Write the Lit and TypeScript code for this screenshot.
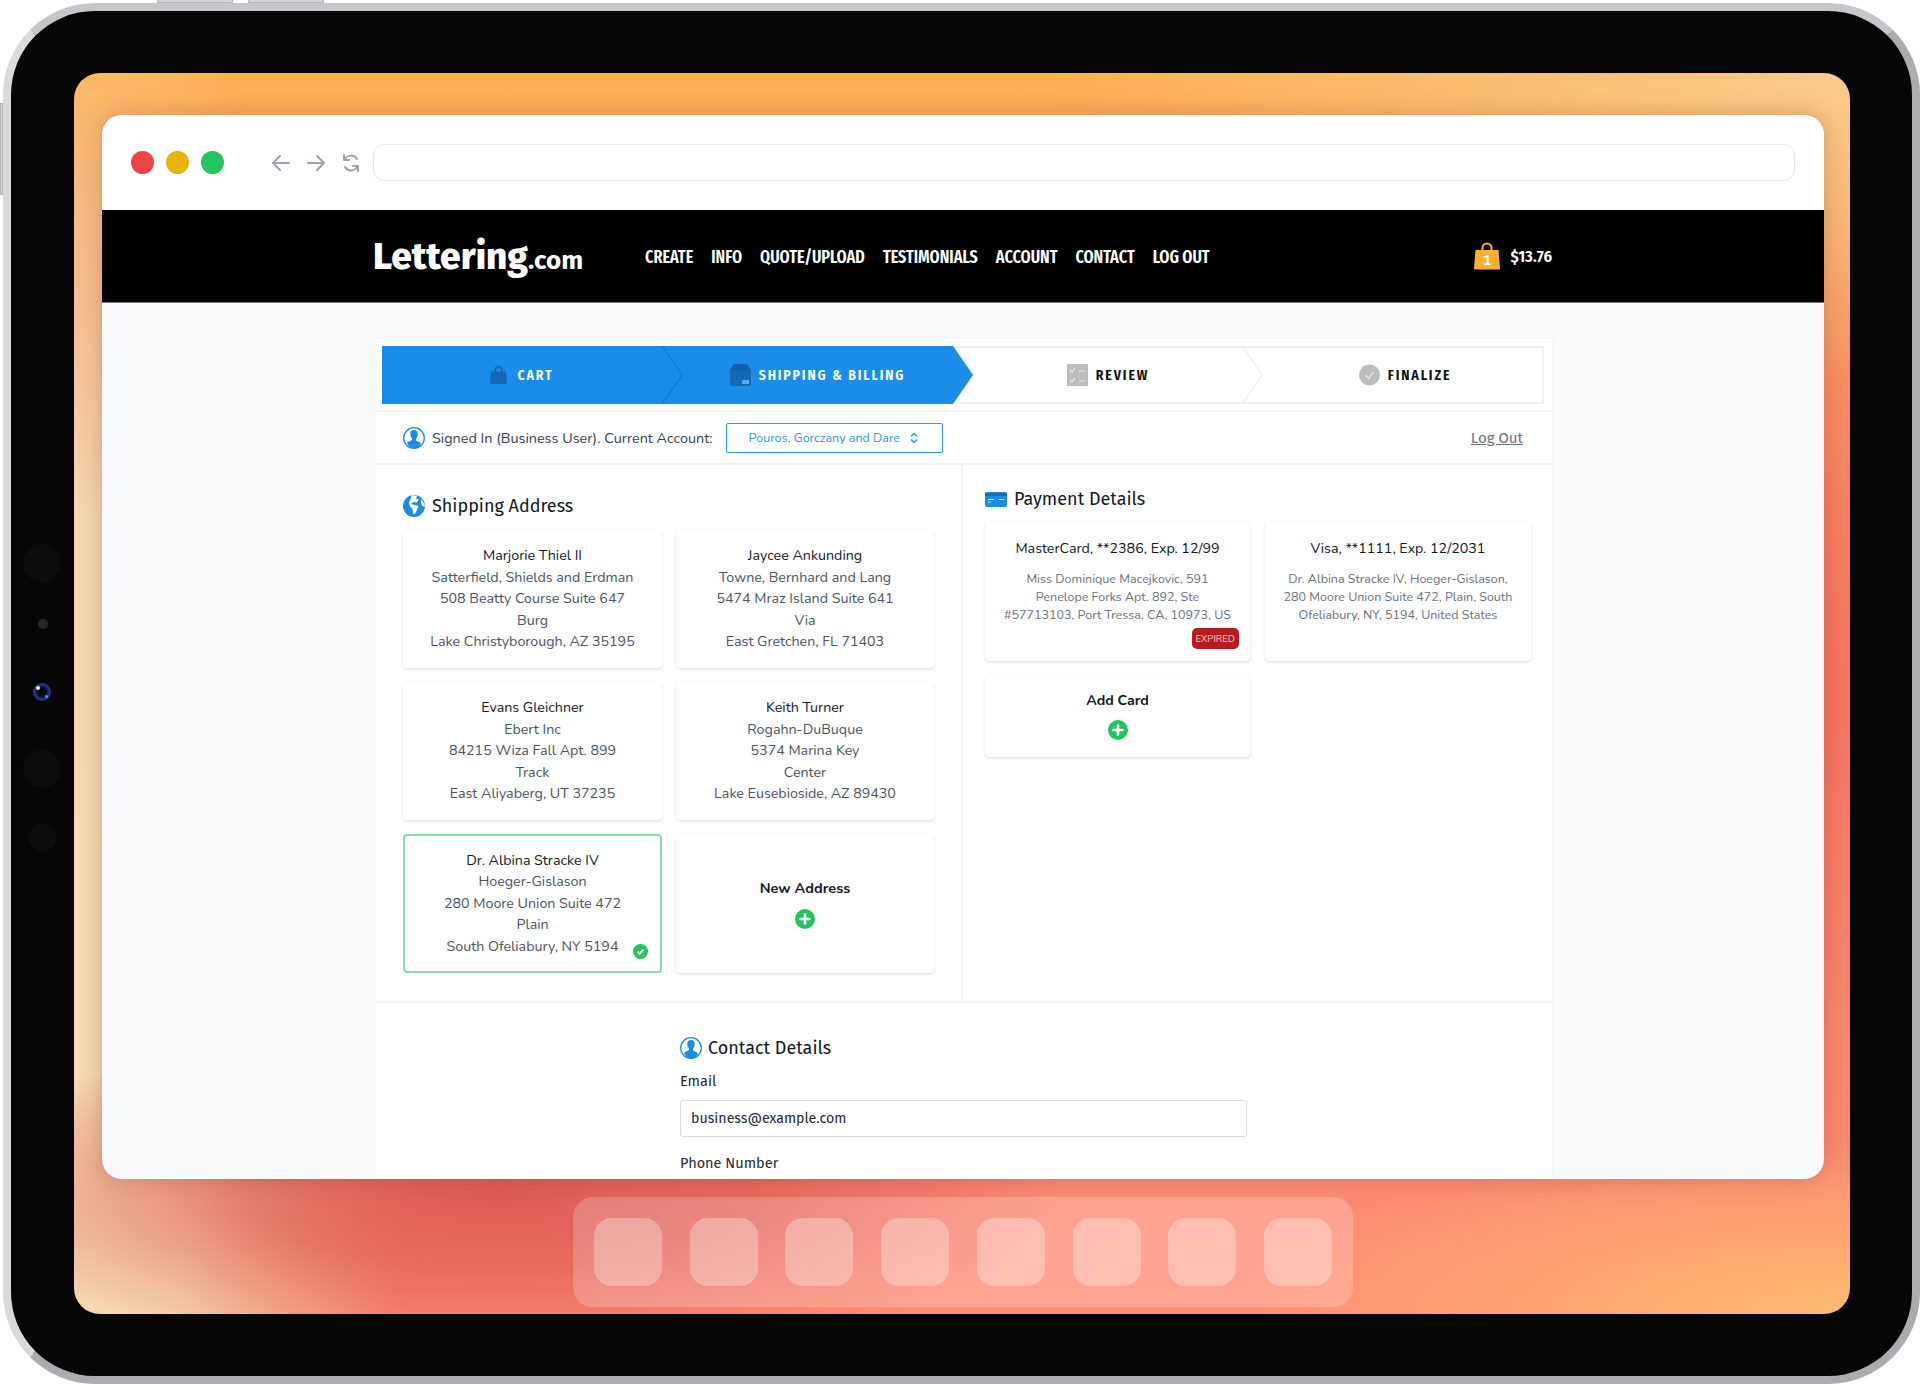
import { LitElement, html, css, svg } from "lit";
import { customElement } from "lit/decorators.js";

const addresses = [
  ["Marjorie Thiel II", "Satterfield, Shields and Erdman", "508 Beatty Course Suite 647", "Burg", "Lake Christyborough, AZ 35195"],
  ["Jaycee Ankunding", "Towne, Bernhard and Lang", "5474 Mraz Island Suite 641", "Via", "East Gretchen, FL 71403"],
  ["Evans Gleichner", "Ebert Inc", "84215 Wiza Fall Apt. 899", "Track", "East Aliyaberg, UT 37235"],
  ["Keith Turner", "Rogahn-DuBuque", "5374 Marina Key", "Center", "Lake Eusebioside, AZ 89430"],
  ["Dr. Albina Stracke IV", "Hoeger-Gislason", "280 Moore Union Suite 472", "Plain", "South Ofeliabury, NY 5194"],
];

const navLinks = ["CREATE", "INFO", "QUOTE/UPLOAD", "TESTIMONIALS", "ACCOUNT", "CONTACT", "LOG OUT"];

const userIcon = html`<svg class="head-icon" viewBox="0 0 22 22">
  <circle cx="11" cy="11" r="10.300" fill="#fff" stroke="#1a8cea" stroke-width="1.300"></circle>
  <path fill="#1a8cea" d="M11 3c-2.800 0-4 2-3.700 4.500.2 1.500.8 2.800 1.700 3.700v1.800c-1 .9-3.500 1.300-5 2.800C5.500 19.500 8 21.400 11 21.400s5.500-1.900 7-5c-1.500-1.500-4-1.900-5-2.800v-1.800c.9-.9 1.500-2.200 1.700-3.700C15 5 13.800 3 11 3z"></path>
</svg>`;

const globeIcon = html`<svg class="head-icon" viewBox="0 0 22 22">
  <circle cx="11" cy="11" r="11" fill="#1a8cea"></circle>
  <path fill="#fff" d="M8.500.3L14 .8l-1 2.700 3 1-2 3-4-.5-2 2 4 1 3.500 1-1.500 4-2 4-2-.5-.5-4.500L7 11.500l-1-4 1.500-3zM18.500 4l3 5 .3 3-2.500-1-1.500-3z"></path>
</svg>`;

const cardIcon = html`<svg class="card-icon" viewBox="0 0 22 15">
  <rect width="22" height="15" rx="2" fill="#1a8cea"></rect>
  <rect y="1" width="22" height="3" fill="#0f6fc4"></rect>
  <path d="M3 7.500h6M14 7.500h5M3 10h3" stroke="#cfe7fb" stroke-width="1"></path>
</svg>`;

const bagIcon = html`<svg class="bag-icon" viewBox="0 0 17 18">
  <path d="M5 6V4.500a3.500 3.500 0 0 1 7 0V6" fill="none" stroke="#1568b3" stroke-width="2"></path>
  <path d="M1 5.500h15l1 11.500a1 1 0 0 1-1 1H1a1 1 0 0 1-1-1z" fill="#1568b3"></path>
</svg>`;

const boxIcon = html`<svg class="step-icon" viewBox="0 0 21 22">
  <path d="M4 0h13l4 6H0z" fill="#125fa5"></path>
  <path d="M0 6h21v14.500a1.500 1.500 0 0 1-1.500 1.500h-18A1.500 1.500 0 0 1 0 20.500z" fill="#1568b3"></path>
  <rect x="12" y="16" width="7" height="4" fill="#5da9e8"></rect>
</svg>`;

const reviewIcon = html`<svg class="step-icon" viewBox="0 0 21 22">
  <rect width="21" height="22" fill="#bdbdbd"></rect>
  <path d="M3 6l2 2 3-4M3 16l2 2 3-4M12 7h6M12 17h6" fill="none" stroke="#eee" stroke-width="1.200"></path>
</svg>`;

const finalizeIcon = html`<svg class="step-icon" viewBox="0 0 21 22">
  <circle cx="10.500" cy="11" r="10.500" fill="#bdbdbd"></circle>
  <path d="M6.500 11.500l3 3 5-6.500" fill="none" stroke="#f3f3f3" stroke-width="1.100"></path>
</svg>`;

const plusIcon = html`<svg class="plus" viewBox="0 0 20 20">
  <circle cx="10" cy="10" r="10" fill="#22c55e"></circle>
  <path d="M10 5.500v9M5.500 10h9" stroke="#fff" stroke-width="2.600" stroke-linecap="round"></path>
</svg>`;

const stepShapes = svg`
  <rect x="1" y="1" width="1160" height="56" fill="#fff" stroke="#f1f2f4" stroke-width="2"></rect>
  <path d="M0 0H571L591 29L571 58H0Z" fill="#1a8cea"></path>
  <path d="M280 0L300 29L280 58" fill="none" stroke="#1570c0" stroke-width="1"></path>
  <path d="M861 1L880 29L861 57" fill="none" stroke="#e8e9eb" stroke-width="1"></path>
`;

@customElement("app-root")
export class AppRoot extends LitElement {
  static styles = css`
    :host {
      display: block;
      width: 1920px;
      height: 1384px;
      background: #fff;
      overflow: hidden;
      font-family: "Nunito", "Lato", sans-serif;
    }
    .device {
      position: relative;
      box-sizing: border-box;
      width: 1917px;
      height: 1381px;
      margin: 3px 0 0 3px;
      padding: 62px 62px 62px 63px;
      background: #060606;
      border: 8px solid #d9dadc;
      border-top-color: #c6c7ca;
      border-right-color: #abacb0;
      border-bottom-color: #abacb0;
      border-radius: 92px;
    }
    .hw-btn {
      position: absolute;
      background: #d4d5d8;
      border: 1px solid #b5b6b9;
      box-sizing: border-box;
    }
    .hw-top1 { left: 146px; top: -12px; width: 76px; height: 4px; border-radius: 2px 2px 0 0; }
    .hw-top2 { left: 237px; top: -12px; width: 76px; height: 4px; border-radius: 2px 2px 0 0; }
    .hw-side { left: -11px; top: 92px; width: 3px; height: 92px; }
    .sensor { position: absolute; border-radius: 50%; background: #0c0c0c; }
    .sensor.big { left: 12px; width: 38px; height: 38px; }
    .sensor.s1 { top: 533px; }
    .sensor.s2 { left: 27px; top: 608px; width: 10px; height: 10px; background: #2a2a2a; }
    .sensor.s3 { top: 739px; }
    .sensor.s4 { left: 17px; top: 813px; width: 28px; height: 28px; }
    .camera {
      position: absolute;
      left: 22px;
      top: 672px;
      width: 18px;
      height: 18px;
      border-radius: 50%;
      background: radial-gradient(circle at 50% 50%, #05050f 0 30%, #2c3590 60%, #141a50 100%);
    }
    .camera::before {
      content: "";
      position: absolute;
      left: 3px;
      top: 3px;
      width: 4px;
      height: 4px;
      border-radius: 50%;
      background: #eee;
    }
    .camera::after {
      content: "";
      position: absolute;
      right: 3px;
      bottom: 3px;
      width: 3px;
      height: 3px;
      border-radius: 50%;
      background: #3aa0f0;
    }
    .screen {
      box-sizing: border-box;
      height: 100%;
      padding: 42px 26px 0 28px;
      border-radius: 26px;
      overflow: hidden;
      background:
        radial-gradient(ellipse 560px 170px at 24% 90%, #dc5c55 0, rgba(220, 92, 85, 0.7) 45%, rgba(220, 92, 85, 0) 100%),
        radial-gradient(ellipse 340px 1000px at 0 72%, #f5dab2 0, #f5d8b0 45%, rgba(245, 216, 176, 0) 100%),
        radial-gradient(ellipse 620px 170px at 100% 100%, #ffbb70 0, rgba(255, 187, 112, 0) 100%),
        radial-gradient(ellipse 800px 300px at 100% 0, #f9ca8c 0, rgba(249, 202, 140, 0) 100%),
        linear-gradient(180deg, #fcb050 0, #f8a760 8%, #f77e62 36%, #f6745e 50%, #f98670 78%, #ff8e74 100%);
    }
    .browser {
      width: 1722px;
      height: 1064px;
      display: flex;
      flex-direction: column;
      overflow: hidden;
      border-radius: 20px;
      background: #f9fafb;
      box-shadow: 0 0 22px rgba(120, 50, 30, 0.28);
    }
    .titlebar {
      flex: none;
      height: 95px;
      box-sizing: border-box;
      display: flex;
      align-items: center;
      padding: 0 29px;
      background: #fff;
    }
    .dot { width: 23px; height: 23px; border-radius: 50%; margin-right: 12px; }
    .red { background: #ef4444; }
    .amber { background: #eab308; }
    .green { background: #22c55e; }
    .tools { display: flex; gap: 15px; margin: 0 12px 0 35px; }
    .tools svg { width: 20px; height: 20px; fill: none; stroke: #9ca3af; stroke-width: 2; stroke-linecap: round; stroke-linejoin: round; }
    .url { flex: 1; height: 37px; box-sizing: border-box; border: 1px solid #e5e7eb; border-radius: 11px; }
    .topnav {
      flex: none;
      height: 93px;
      box-sizing: border-box;
      display: flex;
      align-items: center;
      padding-left: 273px;
      background: #000;
      border-bottom: 1px solid #777;
      color: #fff;
      font-family: "Fira Sans Condensed", "Open Sans", sans-serif;
      font-stretch: 62.5%;
      font-weight: 600;
    }
    .logo {
      width: 210px;
      margin: 0 62px 0 -2px;
      font-family: "Fira Sans", "Open Sans", sans-serif;
      font-stretch: normal;
      font-size: 37px;
      font-weight: 800;
      white-space: nowrap;
      line-height: 1;
    }
    .logo span { font-size: 26px; font-weight: 700; }
    .links {
      display: flex;
      gap: 18px;
      padding-top: 2px;
      font-family: "Fira Sans Extra Condensed", "Fira Sans Condensed", "Open Sans", sans-serif;
      font-size: 17.500px;
    }
    .cart { display: flex; align-items: center; gap: 10px; margin-left: auto; margin-right: 272px; font-size: 16.700px; }
    .lock { position: relative; width: 26px; height: 28px; }
    .lock svg { display: block; width: 26px; height: 28px; }
    .lock b {
      position: absolute;
      left: 0;
      right: 0;
      bottom: 2px;
      text-align: center;
      font: 700 14px "Liberation Sans", sans-serif;
      color: #fff;
    }
    .page { flex: 1; min-height: 0; padding: 36px 0 0 273px; }
    .panel { width: 1177px; height: 100%; background: #fff; box-shadow: 0 0 0 1px #f3f4f6; }
    .stepper-wrap { height: 73px; box-sizing: border-box; padding: 7px; border-bottom: 2px solid #f3f4f6; }
    .stepper {
      position: relative;
      width: 1162px;
      height: 58px;
      display: grid;
      grid-template-columns: 280px 311px 270px 1fr;
    }
    .stepper > svg { position: absolute; inset: 0; width: 1162px; height: 58px; }
    .step {
      position: relative;
      display: flex;
      align-items: center;
      justify-content: center;
      gap: 8px;
      font-family: "Fira Sans Extra Condensed", "Fira Sans Condensed", "Open Sans", sans-serif;
      font-stretch: 62.5%;
      font-weight: 600;
      font-size: 15px;
      letter-spacing: 1.850px;
      color: #111;
    }
    .step.done { color: #fff; }
    .step.last { padding-left: 23px; }
    .step-icon { width: 21px; height: 22px; }
    .bag-icon { width: 17px; height: 18px; margin-right: 2px; }
    .account {
      height: 53px;
      box-sizing: border-box;
      display: flex;
      align-items: center;
      padding: 0 29px 0 28px;
      border-bottom: 2px solid #f3f4f6;
      font-size: 14.400px;
      color: #374151;
    }
    .head-icon { width: 22px; height: 22px; margin-right: 7px; flex: none; }
    .select {
      box-sizing: border-box;
      width: 217px;
      height: 30px;
      margin-left: 13px;
      display: flex;
      align-items: center;
      padding: 0 24px 0 22px;
      justify-content: space-between;
      border: 1px solid #2f97ec;
      border-radius: 2px;
      font-size: 12.500px;
      color: #2f97ec;
      white-space: nowrap;
    }
    .select svg { width: 8px; height: 12px; fill: none; stroke: #2f97ec; stroke-width: 1.400px; }
    .logout { margin-left: auto; color: #6b7280; text-decoration: underline; font-size: 15px; font-family: "Fira Sans", "Noto Sans", sans-serif; }
    .columns { display: flex; height: 536px; border-bottom: 2px solid #f3f4f6; }
    .col-left { width: 588px; box-sizing: border-box; padding: 29px 0 0 28px; border-right: 2px solid #f3f4f6; }
    .col-right { flex: 1; padding: 22px 0 0 22px; }
    .heading {
      display: flex;
      align-items: center;
      height: 24px;
      font-family: "Fira Sans", "Noto Sans", sans-serif;
      font-size: 18px;
      color: #111827;
      white-space: nowrap;
    }
    .col-left .heading { margin-bottom: 12px; }
    .col-right .heading { margin-bottom: 11px; }
    .card-icon { width: 22px; height: 15px; margin-right: 7px; flex: none; }
    .addr-grid { display: grid; grid-template-columns: 259px 258px; grid-template-rows: 138px 138px 139px; gap: 14px; }
    .addr {
      position: relative;
      box-sizing: border-box;
      display: flex;
      flex-direction: column;
      align-items: center;
      justify-content: center;
      background: #fff;
      border-radius: 4px;
      box-shadow: 0 1px 3px rgba(0, 0, 0, 0.14);
      font-size: 14.250px;
      line-height: 21.600px;
      color: #4b5563;
      text-align: center;
    }
    .addr .name { color: #111827; }
    .addr.selected { border: 2px solid #86dfa6; box-shadow: none; }
    .tick { position: absolute; right: 12px; bottom: 12px; width: 15px; height: 15px; }
    .new { font-weight: 700; color: #111827; font-size: 14.500px; }
    .plus { width: 20px; height: 20px; margin-top: 9px; }
    .pay-grid { display: grid; grid-template-columns: 265px 266px; gap: 14px 15px; }
    .pay {
      position: relative;
      box-sizing: border-box;
      height: 139px;
      padding: 16px 16px 0;
      background: #fff;
      border-radius: 4px;
      box-shadow: 0 1px 3px rgba(0, 0, 0, 0.14);
      text-align: center;
    }
    .pay.add { height: 82px; padding-top: 15px; }
    .pay .title { font-size: 14.250px; line-height: 22px; color: #111827; }
    .pay .body { margin-top: 10px; font-size: 12.500px; line-height: 18px; color: #6b7280; }
    .pay.add .plus { margin-top: 8px; }
    .pay.add .title { font-weight: 700; font-size: 14.250px; }
    .badge {
      position: absolute;
      right: 11px;
      bottom: 12px;
      padding: 0 4px;
      height: 21px;
      line-height: 21px;
      border-radius: 5px;
      background: #b91c1c;
      color: #fecaca;
      font-size: 9.600px;
    }
    .contact { padding: 33px 0 0 305px; }
    .contact .heading { margin-bottom: 11px; }
    .contact .head-icon { margin-right: 6px; }
    .label { height: 20px; line-height: 20px; font-family: "Fira Sans", "Noto Sans", sans-serif; font-size: 14.500px; color: #1f2937; }
    .input {
      box-sizing: border-box;
      width: 567px;
      height: 37px;
      margin: 9px 0 16px;
      padding-left: 10px;
      line-height: 35px;
      border: 1px solid #d9dbdf;
      border-radius: 3px;
      font-family: "Fira Sans", "Noto Sans", sans-serif;
      font-size: 14.200px;
      color: #1f2937;
    }
    .dock {
      box-sizing: border-box;
      width: 780px;
      height: 110px;
      margin: 18px 0 0 471px;
      padding: 0 21px;
      display: flex;
      align-items: center;
      justify-content: space-between;
      border-radius: 20px;
      background: rgba(255, 255, 255, 0.2);
    }
    .app { width: 68px; height: 68px; border-radius: 18px; background: rgba(255, 255, 255, 0.3); }
  `;

  render() {
    return html`
      <div class="device">
        <div class="hw-btn hw-top1"></div>
        <div class="hw-btn hw-top2"></div>
        <div class="hw-btn hw-side"></div>
        <div class="sensor big s1"></div>
        <div class="sensor s2"></div>
        <div class="camera"></div>
        <div class="sensor big s3"></div>
        <div class="sensor s4"></div>
        <div class="screen">
          <div class="browser">
            <div class="titlebar">
              <div class="dot red"></div>
              <div class="dot amber"></div>
              <div class="dot green"></div>
              <div class="tools">
                <svg viewBox="0 0 20 20"><path d="M18 10H2M9 3l-7 7 7 7"></path></svg>
                <svg viewBox="0 0 20 20"><path d="M2 10h16M11 3l7 7-7 7"></path></svg>
                <svg viewBox="0 0 20 20"><path d="M3 2v5h5M17 18v-5h-5M3.500 7A7 7 0 0 1 16 6M16.500 13A7 7 0 0 1 4 14"></path></svg>
              </div>
              <div class="url"></div>
            </div>
            <div class="topnav">
              <div class="logo">Lettering<span>.com</span></div>
              <div class="links">${navLinks.map((l) => html`<span>${l}</span>`)}</div>
              <div class="cart">
                <div class="lock">
                  <svg viewBox="0 0 26 28">
                    <path d="M8.500 9V6a4.500 4.500 0 0 1 9 0v3" fill="none" stroke="#fbb034" stroke-width="2"></path>
                    <path d="M1.500 8h23l1.500 18.500a1 1 0 0 1-1 1H1a1 1 0 0 1-1-1z" fill="#fbb034"></path>
                  </svg>
                  <b>1</b>
                </div>
                <span>$13.76</span>
              </div>
            </div>
            <div class="page">
              <div class="panel">
                <div class="stepper-wrap">
                  <div class="stepper">
                    <svg viewBox="0 0 1162 58">${stepShapes}</svg>
                    <div class="step done">${bagIcon}<span>CART</span></div>
                    <div class="step done">${boxIcon}<span>SHIPPING &amp; BILLING</span></div>
                    <div class="step">${reviewIcon}<span>REVIEW</span></div>
                    <div class="step last">${finalizeIcon}<span>FINALIZE</span></div>
                  </div>
                </div>
                <div class="account">
                  ${userIcon}<span>Signed In (Business User). Current Account:</span>
                  <div class="select">
                    <span>Pouros, Gorczany and Dare</span>
                    <svg viewBox="0 0 8 12"><path d="M1 4.500L4 1.500L7 4.500M1 7.500L4 10.500L7 7.500"></path></svg>
                  </div>
                  <span class="logout">Log Out</span>
                </div>
                <div class="columns">
                  <div class="col-left">
                    <div class="heading">${globeIcon}Shipping Address</div>
                    <div class="addr-grid">
                      ${addresses.map(
                        (a, i) => html`
                          <div class="addr ${i === 4 ? "selected" : ""}">
                            <div class="name">${a[0]}</div>
                            ${a.slice(1).map((line) => html`<div>${line}</div>`)}
                            ${i === 4
                              ? html`<svg class="tick" viewBox="0 0 15 15">
                                  <circle cx="7.500" cy="7.500" r="7.500" fill="#22c55e"></circle>
                                  <path d="M4.500 7.800l2 2 4-4.300" fill="none" stroke="#fff" stroke-width="2"></path>
                                </svg>`
                              : ""}
                          </div>
                        `
                      )}
                      <div class="addr"><div class="new">New Address</div>${plusIcon}</div>
                    </div>
                  </div>
                  <div class="col-right">
                    <div class="heading">${cardIcon}Payment Details</div>
                    <div class="pay-grid">
                      <div class="pay">
                        <div class="title">MasterCard, **2386, Exp. 12/99</div>
                        <div class="body">Miss Dominique Macejkovic, 591 Penelope Forks Apt. 892, Ste #57713103, Port Tressa, CA, 10973, US</div>
                        <div class="badge">EXPIRED</div>
                      </div>
                      <div class="pay">
                        <div class="title">Visa, **1111, Exp. 12/2031</div>
                        <div class="body">Dr. Albina Stracke IV, Hoeger-Gislason, 280 Moore Union Suite 472, Plain, South Ofeliabury, NY, 5194, United States</div>
                      </div>
                      <div class="pay add">
                        <div class="title">Add Card</div>
                        ${plusIcon}
                      </div>
                    </div>
                  </div>
                </div>
                <div class="contact">
                  <div class="heading">${userIcon}Contact Details</div>
                  <div class="label">Email</div>
                  <div class="input">business@example.com</div>
                  <div class="label">Phone Number</div>
                </div>
              </div>
            </div>
          </div>
          <div class="dock">
            ${Array.from({ length: 8 }, () => html`<div class="app"></div>`)}
          </div>
        </div>
      </div>
    `;
  }
}
